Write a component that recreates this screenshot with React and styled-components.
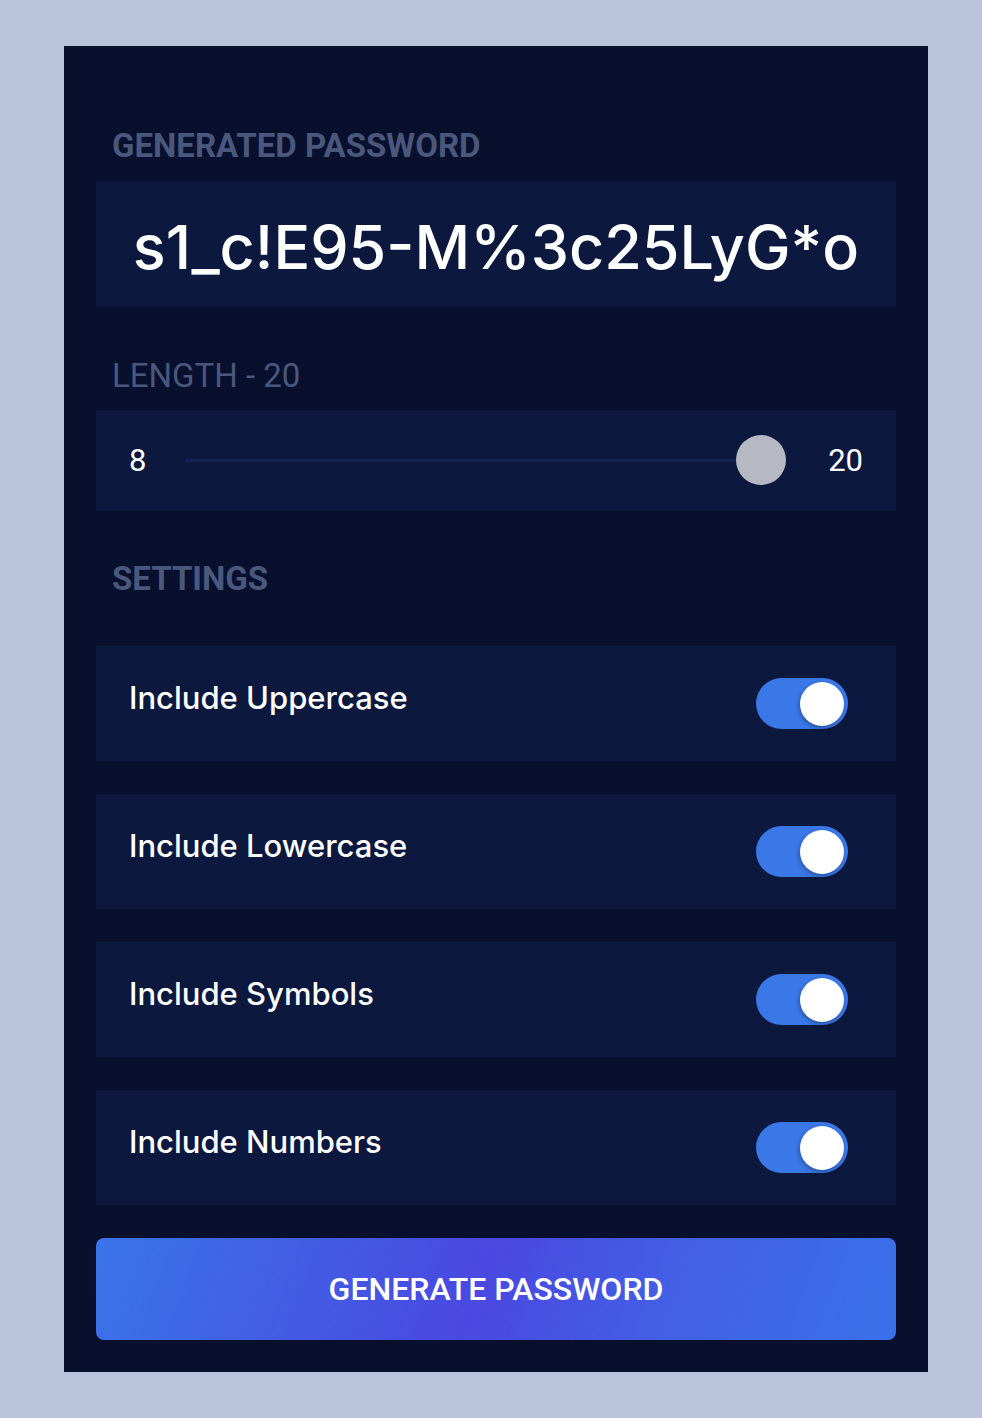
import styled, { createGlobalStyle } from "styled-components";

const GlobalStyle = createGlobalStyle`
  body {
    margin: 0;
    background-color: #bac4db;
    font-family: "Inter", "Roboto", sans-serif;
  }
`;

const Page = styled.div`
  min-height: 1418px;
  padding: 46px 54px 46px 64px;
  box-sizing: border-box;
`;

const Card = styled.div`
  width: 864px;
  height: 1326px;
  box-sizing: border-box;
  background-color: #08102d;
  padding: 81px 32px 32px;
  display: flex;
  flex-direction: column;
`;

const Label = styled.h2`
  margin: ${(p) => p.$top || 0}px 0 0 16px;
  font-family: "Roboto", sans-serif;
  font-size: 33px;
  line-height: 38px;
  height: 38px;
  font-weight: ${(p) => (p.$bold ? 700 : 400)};
  color: #4b587d;
`;

const PasswordBox = styled.div`
  margin-top: 16px;
  height: 126px;
  background-color: #0c183e;
  display: flex;
  align-items: center;
  justify-content: center;
  color: #ffffff;
  font-size: 61px;
  font-weight: 500;
  padding-top: 6px;
  box-sizing: border-box;
`;

const SliderBox = styled.div`
  margin-top: 15px;
  height: 101px;
  background-color: #0c183e;
  display: flex;
  align-items: center;
  padding: 0 33px;
  box-sizing: border-box;
  gap: 20px;
  color: #ffffff;
  font-family: "Roboto", sans-serif;
  font-size: 31px;
`;

const Track = styled.div`
  flex: 1;
  height: 3px;
  background-color: #142452;
  position: relative;
  margin-left: 19px;
  margin-right: 47px;
`;

const Thumb = styled.div`
  position: absolute;
  right: -25px;
  top: -24px;
  width: 50px;
  height: 50px;
  border-radius: 50%;
  background-color: #b6b8c4;
`;

const Settings = styled.div`
  margin-top: 48px;
  display: flex;
  flex-direction: column;
  gap: 33px;
`;

const Row = styled.div`
  height: 115px;
  background-color: #0c183e;
  display: flex;
  align-items: center;
  justify-content: space-between;
  padding: 0 48px 0 33px;
  box-sizing: border-box;
`;

const RowText = styled.span`
  color: #ffffff;
  font-size: 31px;
  font-weight: 500;
  margin-top: -12px;
`;

const Toggle = styled.div`
  width: 92px;
  height: 51px;
  border-radius: 26px;
  background-color: #3a78e8;
  display: flex;
  align-items: center;
  justify-content: flex-end;
  padding: 0 4px;
  box-sizing: border-box;
`;

const Knob = styled.div`
  width: 44px;
  height: 44px;
  border-radius: 50%;
  background-color: #ffffff;
  box-shadow: -1px 2px 4px rgba(0, 0, 0, 0.3);
`;

const Button = styled.button`
  margin-top: 33px;
  height: 102px;
  border: 0;
  border-radius: 8px;
  background: linear-gradient(110deg, #3a74ea 0%, #4a48e0 48%, #4360e6 72%, #3a70ea 100%);
  color: #ffffff;
  font-family: "Roboto", sans-serif;
  font-size: 32px;
  font-weight: 500;
  cursor: pointer;
`;

const options = [
  "Include Uppercase",
  "Include Lowercase",
  "Include Symbols",
  "Include Numbers",
];

export default function App() {
  return (
    <>
      <GlobalStyle />
      <Page>
        <Card>
          <Label $bold>GENERATED PASSWORD</Label>
          <PasswordBox>s1_c!E95-M%3c25LyG*o</PasswordBox>
          <Label $top={50}>LENGTH - 20</Label>
          <SliderBox>
            <span>8</span>
            <Track>
              <Thumb />
            </Track>
            <span>20</span>
          </SliderBox>
          <Label $bold $top={49}>
            SETTINGS
          </Label>
          <Settings>
            {options.map((o) => (
              <Row key={o}>
                <RowText>{o}</RowText>
                <Toggle>
                  <Knob />
                </Toggle>
              </Row>
            ))}
          </Settings>
          <Button>GENERATE PASSWORD</Button>
        </Card>
      </Page>
    </>
  );
}
